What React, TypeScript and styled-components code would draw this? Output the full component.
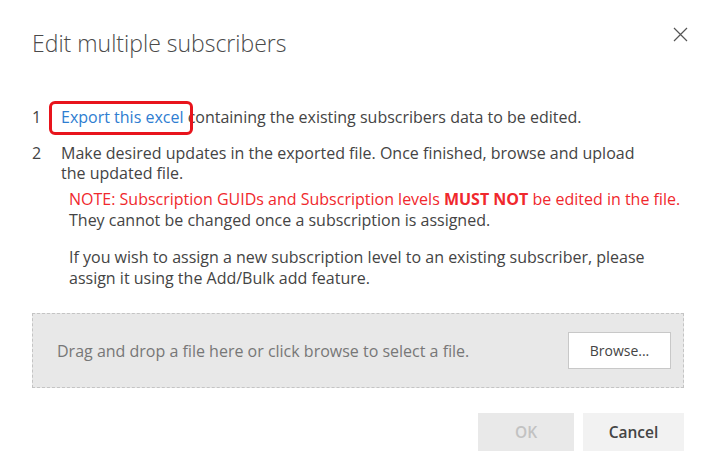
import styled, { createGlobalStyle } from 'styled-components';

const GlobalStyle = createGlobalStyle`
  html, body {
    margin: 0;
    padding: 0;
    background: #ffffff;
  }
  body {
    font-family: "Open Sans", "Noto Sans", "Liberation Sans", sans-serif;
    color: #444;
  }
`;

const Dialog = styled.div`
  width: 712px;
  height: 471px;
  box-sizing: border-box;
  padding: 0 28px 0 32px;
  background: #fff;
`;

const Header = styled.div`
  display: flex;
  align-items: flex-start;
  justify-content: space-between;
  padding-top: 27px;
  height: 78px;
  box-sizing: border-box;
`;

const Title = styled.h1`
  margin: 0;
  font-size: 23px;
  font-weight: 300;
  line-height: 32px;
  color: #4a4a4a;
`;

const CloseButton = styled.button`
  border: 0;
  background: transparent;
  padding: 0;
  width: 20px;
  height: 20px;
  margin-top: -3px;
  margin-right: -6px;
  display: flex;
  align-items: center;
  justify-content: center;
  cursor: pointer;
  color: #555;
`;

const Steps = styled.ol`
  list-style: none;
  margin: 29px 0 0;
  padding: 0;
  display: flex;
  flex-direction: column;
  gap: 16px;
  font-size: 16px;
  line-height: 20px;
  color: #444;
`;

const Step = styled.li`
  display: grid;
  grid-template-columns: 29px 1fr;
`;

const StepNum = styled.span`
  color: #444;
`;

const StepBody = styled.div``;

const LinkWrap = styled.span`
  position: relative;
  display: inline-block;
`;

const ExportLink = styled.a`
  color: #2e7dd1;
  text-decoration: none;
  cursor: pointer;
`;

const Highlight = styled.span`
  position: absolute;
  left: -12px;
  right: -10px;
  top: -6px;
  bottom: -8px;
  border: 3px solid #e8141c;
  border-radius: 6px;
  pointer-events: none;
`;

const Note = styled.div<{ $red?: boolean; $gap?: number }>`
  margin-left: 8px;
  margin-top: ${p => p.$gap ?? 0}px;
  line-height: 21px;
  color: ${p => (p.$red ? '#f0282d' : '#444')};
`;

const DropZone = styled.div`
  margin-top: 24px;
  height: 75px;
  box-sizing: border-box;
  border: 1px dashed #c4c4c4;
  background: #e8e8e8;
  display: flex;
  align-items: center;
  justify-content: space-between;
  padding: 0 12px 0 24px;
`;

const DropText = styled.span`
  font-size: 16px;
  color: #777;
`;

const BrowseButton = styled.button`
  width: 103px;
  height: 37px;
  background: #fff;
  border: 1px solid #c8c8c8;
  font-family: inherit;
  font-size: 14px;
  color: #444;
  cursor: pointer;
`;

const Footer = styled.div`
  display: flex;
  justify-content: flex-end;
  gap: 9px;
  margin-top: 25px;
`;

const FooterButton = styled.button<{ $disabled?: boolean }>`
  width: ${p => (p.$disabled ? 96 : 101)}px;
  height: 38px;
  border: 0;
  font-family: inherit;
  font-size: 15.5px;
  font-weight: 600;
  background: ${p => (p.$disabled ? '#e9e9e9' : '#f2f2f2')};
  color: ${p => (p.$disabled ? '#c2c2c2' : '#444')};
  cursor: ${p => (p.$disabled ? 'default' : 'pointer')};
`;

export default function App() {
  return (
    <>
      <GlobalStyle />
      <Dialog>
        <Header>
          <Title>Edit multiple subscribers</Title>
          <CloseButton aria-label="Close">
            <svg width="15" height="15" viewBox="0 0 15 15">
              <path d="M1 1 L14 14 M14 1 L1 14" stroke="#555" strokeWidth="1.2" fill="none" />
            </svg>
          </CloseButton>
        </Header>

        <Steps>
          <Step>
            <StepNum>1</StepNum>
            <StepBody>
              <LinkWrap>
                <ExportLink>Export this excel</ExportLink>
                <Highlight />
              </LinkWrap>{' '}
              containing the existing subscribers data to be edited.
            </StepBody>
          </Step>
          <Step>
            <StepNum>2</StepNum>
            <StepBody>
              Make desired updates in the exported file. Once finished, browse and upload
              <br />
              the updated file.
              <Note $red $gap={6}>
                NOTE: Subscription GUIDs and Subscription levels <strong>MUST NOT</strong> be edited in the file.
              </Note>
              <Note>They cannot be changed once a subscription is assigned.</Note>
              <Note $gap={16}>
                If you wish to assign a new subscription level to an existing subscriber, please
                <br />
                assign it using the Add/Bulk add feature.
              </Note>
            </StepBody>
          </Step>
        </Steps>

        <DropZone>
          <DropText>Drag and drop a file here or click browse to select a file.</DropText>
          <BrowseButton>Browse...</BrowseButton>
        </DropZone>

        <Footer>
          <FooterButton $disabled disabled>OK</FooterButton>
          <FooterButton>Cancel</FooterButton>
        </Footer>
      </Dialog>
    </>
  );
}
